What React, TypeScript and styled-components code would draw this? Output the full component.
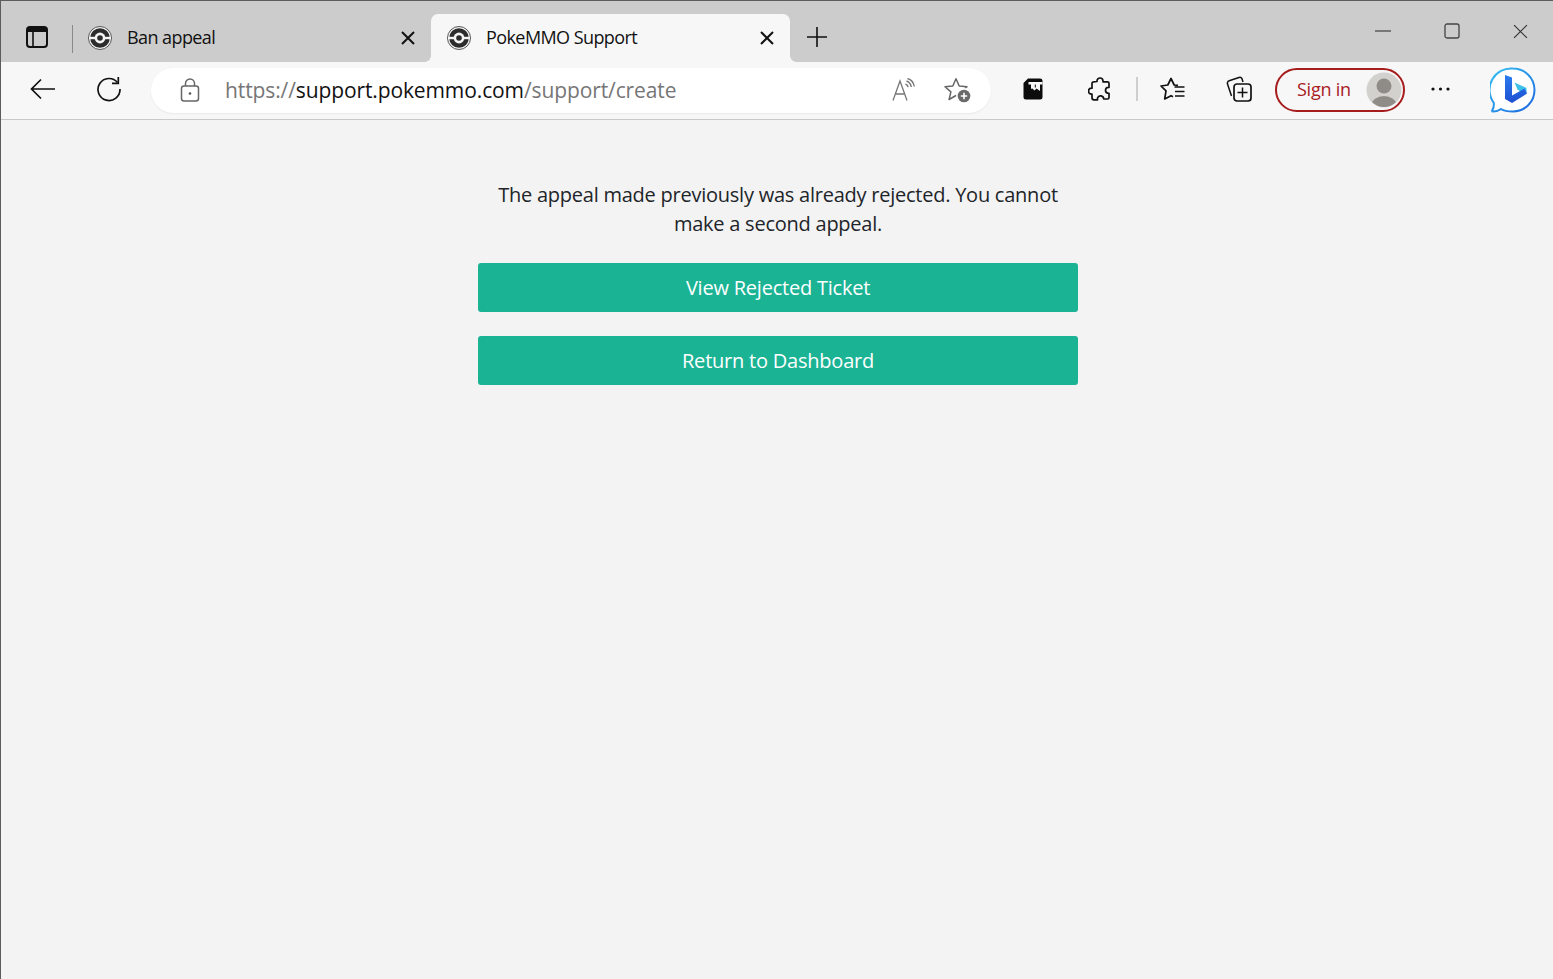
import React from "react";
import styled, { createGlobalStyle } from "styled-components";

const Global = createGlobalStyle`
  html, body { margin: 0; padding: 0; background: #f3f3f3; }
  * { box-sizing: border-box; }
`;

const Win = styled.div`
  width: 1553px; height: 979px; overflow: hidden;
  display: flex; flex-direction: column;
  border-top: 1px solid #5c5c5c; border-left: 1px solid #5c5c5c;
  background: #f3f3f3;
`;
const TabStrip = styled.div`
  height: 61px; background: #cccccc; display: flex; align-items: flex-end;
  flex-shrink: 0;
`;
const SideBtn = styled.div`
  width: 71px; height: 48px; padding: 12px 0 0 25px; flex-shrink: 0;
`;
const StripDivider = styled.div`
  width: 1px; height: 28px; background: #8a8a8a; margin-bottom: 9px; flex-shrink: 0;
`;
const Tab = styled.div<{ $active?: boolean }>`
  position: relative;
  width: ${p => (p.$active ? "359px" : "358px")};
  height: 48px; flex-shrink: 0;
  display: flex; align-items: center;
  padding: 0 16px 0 ${p => (p.$active ? "16px" : "15px")};
  background: ${p => (p.$active ? "#f7f7f7" : "transparent")};
  border-radius: 7px 7px 0 0;
  color: #111;
  font: 18px/24px "Open Sans", sans-serif;
  letter-spacing: -0.58px;
  ${p => p.$active && `
    &::before, &::after {
      content: ""; position: absolute; bottom: 0; width: 6px; height: 6px;
    }
    &::before { left: -6px; background: radial-gradient(circle at 0 0, transparent 5.500px, #f7f7f7 6px); }
    &::after { right: -6px; background: radial-gradient(circle at 100% 0, transparent 5.500px, #f7f7f7 6px); }
  `}
`;
const TabTitle = styled.span`
  flex: 1; margin-left: 15px; padding-bottom: 2px; white-space: nowrap;
`;
const PlusSlot = styled.div`
  width: 53px; height: 50px; display: flex; align-items: center; justify-content: center; flex-shrink: 0;
`;
const WinControls = styled.div`
  margin-left: auto; align-self: flex-start; display: flex; padding-top: 20px; margin-right: -2px;
`;
const WinBtn = styled.div`
  width: 69px; height: 20px; display: flex; align-items: center; justify-content: center;
`;
const Toolbar = styled.div`
  height: 58px; background: #f7f7f7; border-bottom: 1px solid #c9c9c9; flex-shrink: 0;
  display: flex; align-items: center; padding-bottom: 3px;
`;
const ToolIcon = styled.div<{ $w: number; $ml?: number; $mt?: number }>`
  width: ${p => p.$w}px; margin-left: ${p => p.$ml ?? 0}px; margin-top: ${p => p.$mt ?? 0}px; height: 44px; flex-shrink: 0;
  display: flex; align-items: center; justify-content: center;
`;
const Address = styled.div`
  width: 840px; height: 45px; margin: 2px 0 0 29px; flex-shrink: 0;
  background: #fff; border-radius: 23px; display: flex; align-items: center;
  box-shadow: 0 1px 2px rgba(0,0,0,.06);
  padding: 0 19px 0 28px;
`;
const Url = styled.div`
  flex: 1; margin-left: 24px; color: #767676; white-space: nowrap;
  font: 21px/28px "Open Sans", sans-serif; letter-spacing: -0.11px;
`;
const Host = styled.span`color: #111;`;
const ToolSep = styled.div`
  width: 2px; height: 24px; background: #cfcfcf; flex-shrink: 0;
`;
const SignIn = styled.div`
  width: 130px; height: 44px; margin: 2px 0 0 23px; flex-shrink: 0;
  border: 2px solid #a61b1b; border-radius: 22px; background: #f7f7f7;
  display: flex; align-items: center; padding: 0 1px 0 20px; justify-content: space-between;
  color: #a8201f; font: 18px/24px "Open Sans", sans-serif; letter-spacing: -0.25px;
`;
const SignInLabel = styled.span`
  padding-bottom: 2px;
`;
const Main = styled.main`
  flex: 1; display: flex; flex-direction: column; align-items: center; padding-top: 60px;
  background: #f3f3f3;
  font-family: "Open Sans", sans-serif;
`;
const Panel = styled.div`
  width: 600px; margin-left: 2px; display: flex; flex-direction: column; gap: 24px;
`;
const Message = styled.p`
  margin: 0 0 1px; text-align: center; color: #212529;
  font-size: 20px; line-height: 29px; letter-spacing: -0.24px;
`;
const ActionButton = styled.a`
  display: flex; height: 49px; align-items: center; justify-content: center;
  background: #1ab394; color: #fff; border-radius: 3px;
  font-size: 20px; letter-spacing: -0.22px;
`;

const Ball = () => (
  <svg width="24" height="24" viewBox="0 0 24 24">
    <circle cx="12" cy="12" r="11.5" fill="#f4f4f4" stroke="#555" strokeWidth="1" />
    <circle cx="12" cy="12" r="9.8" fill="#2c2c2c" />
    <rect x="1" y="10.8" width="22" height="2.4" fill="#f4f4f4" />
    <circle cx="12" cy="12" r="5.4" fill="#f4f4f4" />
    <circle cx="12" cy="12" r="2.8" fill="#2c2c2c" />
  </svg>
);
const CloseX = ({ c = "#111", s = 14, w = 2 }: { c?: string; s?: number; w?: number }) => (
  <svg width={s} height={s} viewBox="0 0 14 14"><path d="M1 1 13 13M13 1 1 13" stroke={c} strokeWidth={w} fill="none" /></svg>
);

export default function App() {
  return (
    <>
      <Global />
      <Win>
        <TabStrip>
          <SideBtn>
            <svg width="22" height="22" viewBox="0 0 22 22" fill="none">
              <rect x="1" y="1" width="20" height="20" rx="3" stroke="#111" strokeWidth="2" />
              <path d="M2 2h18v4H2z" fill="#111" />
              <path d="M7 6v14" stroke="#111" strokeWidth="1.6" />
            </svg>
          </SideBtn>
          <StripDivider />
          <Tab>
            <Ball />
            <TabTitle>Ban appeal</TabTitle>
            <CloseX />
          </Tab>
          <Tab $active>
            <Ball />
            <TabTitle>PokeMMO Support</TabTitle>
            <CloseX />
          </Tab>
          <PlusSlot>
            <svg width="22" height="22" viewBox="0 0 22 22"><path d="M11 1v20M1 11h20" stroke="#111" strokeWidth="1.6" /></svg>
          </PlusSlot>
          <WinControls>
            <WinBtn><svg width="16" height="2"><path d="M0 1h16" stroke="#222" strokeWidth="1" /></svg></WinBtn>
            <WinBtn><svg width="16" height="16" viewBox="0 0 16 16"><rect x="1" y="1" width="14" height="14" rx="2" fill="none" stroke="#444" strokeWidth="1.3" /></svg></WinBtn>
            <WinBtn><CloseX c="#333" s={15} w={1.1} /></WinBtn>
          </WinControls>
        </TabStrip>
        <Toolbar>
          <ToolIcon $w={26} $ml={29}>
            <svg width="26" height="22" viewBox="0 0 26 22" fill="none"><path d="M25 11H1.5M11 1.5 1.5 11l9.500 9.500" stroke="#111" strokeWidth="1.7" /></svg>
          </ToolIcon>
          <ToolIcon $w={26} $ml={40}>
            <svg width="26" height="26" viewBox="0 0 26 26" fill="none"><path d="M21.500 6.500A11 11 0 1 0 24 13" stroke="#111" strokeWidth="1.7" /><path d="M22.300 1v6.300H16" stroke="#111" strokeWidth="1.7" /></svg>
          </ToolIcon>
          <Address>
            <svg width="22" height="24" viewBox="0 0 22 24" fill="none">
              <rect x="2.500" y="8" width="17" height="15" rx="2.500" stroke="#666" strokeWidth="1.5" />
              <path d="M6.500 8V5.500a4.500 4.500 0 0 1 9 0V8" stroke="#666" strokeWidth="1.500" />
              <circle cx="11" cy="15.500" r="1.300" fill="#555" />
            </svg>
            <Url>https://<Host>support.pokemmo.com</Host>/support/create</Url>
            <ToolIcon $w={30}>
              <svg width="26" height="24" viewBox="0 0 26 24" fill="none">
                <path d="M2 22.500 9 3l7 19.500M4.500 16h9" stroke="#777" strokeWidth="1.300" />
                <path d="M14.500 6c1.500.600 2.300 1.600 2.700 3.200M15.500 3c2.800 1 4.300 3 4.800 6M16.500 .500c4 1.200 6.200 4 6.800 8" stroke="#777" strokeWidth="1.400" />
              </svg>
            </ToolIcon>
            <ToolIcon $w={28} $ml={25}>
              <svg width="28" height="26" viewBox="0 0 28 26" fill="none">
                <path d="M12 1.800 15.200 9l7.800.700-5.900 5.200 1.800 7.600-6.900-4-6.900 4 1.800-7.600L1 9.700 8.800 9z" stroke="#666" strokeWidth="1.500" strokeLinejoin="round" />
                <circle cx="20" cy="19" r="8" fill="#fff" />
                <circle cx="20" cy="19" r="6.300" fill="#6a6a6a" />
                <path d="M20 15.800v6.400M16.800 19h6.400" stroke="#fff" strokeWidth="1.600" />
              </svg>
            </ToolIcon>
          </Address>
          <ToolIcon $w={22} $ml={31}>
            <svg width="20" height="22" viewBox="0 0 20 22">
              <path d="M5 .500h12a2.500 2.500 0 0 1 2.500 2.500v16a2.500 2.500 0 0 1-2.500 2.500H3A2.500 2.500 0 0 1 .500 19V5z" fill="#0c0c0c" />
              <path d="M5.500 4h14v2.500h-2.500v6.500l-3.500-2.600-2 2.200-2.500-2.300-1 1V6.500H5.500z" fill="#f7f7f7" />
              <path d="M11.800 6.500h1v3h-1z" fill="#0c0c0c" />
            </svg>
          </ToolIcon>
          <ToolIcon $w={24} $ml={44}>
            <svg width="24" height="24" viewBox="0 0 24 24" fill="none">
              <path d="M9 4.500V4a3 3 0 0 1 6 0v.800h4.500a1.500 1.500 0 0 1 1.500 1.500v4h-.500a3 3 0 0 0 0 6h.5v4.200a1.500 1.500 0 0 1-1.500 1.500h-3.800V22a3.200 3.200 0 0 0-6.200-1v1.800H6a2 2 0 0 1-2-2v-3.600H3.500a3 3 0 0 1 0-6H4V6.300a1.500 1.500 0 0 1 1.500-1.500z" stroke="#111" strokeWidth="1.700" strokeLinejoin="round" />
            </svg>
          </ToolIcon>
          <ToolIcon $w={2} $ml={24}><ToolSep /></ToolIcon>
          <ToolIcon $w={26} $ml={22}>
            <svg width="26" height="24" viewBox="0 0 26 24" fill="none">
              <path d="M18 8.300 14.200 8 11 1.500 7.800 8 1 9l5 4.900L4.700 22l6.300-3.300 2 1" stroke="#111" strokeWidth="1.700" strokeLinejoin="round" />
              <path d="M14.500 10h10M15 14.500h9.500M15 19h9.500" stroke="#111" strokeWidth="1.500" />
            </svg>
          </ToolIcon>
          <ToolIcon $w={26} $ml={40}>
            <svg width="26" height="26" viewBox="0 0 26 26" fill="none">
              <path d="M5.500 20 1.500 8a2.500 2.500 0 0 1 1.700-3.200L13 1.500a2.500 2.500 0 0 1 3 1.200L17 6" stroke="#111" strokeWidth="1.500" />
              <rect x="8" y="8" width="17" height="17" rx="3" fill="#f7f7f7" stroke="#111" strokeWidth="1.700" />
              <path d="M16.500 11.500v10M11.500 16.500h10" stroke="#111" strokeWidth="1.500" />
            </svg>
          </ToolIcon>
          <SignIn>
            <SignInLabel>Sign in</SignInLabel>
            <svg width="36" height="36" viewBox="0 0 36 36">
              <defs><clipPath id="av"><circle cx="18" cy="18" r="17" /></clipPath></defs>
              <circle cx="18" cy="18" r="17.500" fill="#d3d1ce" />
              <g clipPath="url(#av)" fill="#8f8c88">
                <circle cx="18" cy="14" r="7.500" />
                <ellipse cx="18" cy="33" rx="12.500" ry="9" />
              </g>
            </svg>
          </SignIn>
          <ToolIcon $w={22} $ml={25}>
            <svg width="22" height="4" viewBox="0 0 22 4" fill="#111"><circle cx="3" cy="2" r="1.600" /><circle cx="10.500" cy="2" r="1.600" /><circle cx="18" cy="2" r="1.600" /></svg>
          </ToolIcon>
          <ToolIcon $w={48} $ml={37} $mt={2}>
            <svg width="46" height="46" viewBox="0 0 46 46">
              <defs>
                <linearGradient id="ring" x1="0" y1="0" x2="1" y2="1"><stop offset="0" stopColor="#35c1f1" /><stop offset="1" stopColor="#1b66e0" /></linearGradient>
                <linearGradient id="bb" x1="0" y1="0" x2="0" y2="1"><stop offset="0" stopColor="#2a7bf0" /><stop offset="1" stopColor="#1d4fd0" /></linearGradient>
              </defs>
              <path d="M23 1.500a21.500 21.500 0 0 1 0 43c-5 0-9-.500-12-2.500-2 1.500-5 2.500-8 2.500-1 0-1.200-1-.5-1.700 1-1.500 1.500-4 1.300-7A21.500 21.500 0 0 1 23 1.500z" fill="#fff" stroke="url(#ring)" strokeWidth="2" />
              <path d="M24.500 15.500l12 5.500v5.500l-2 1-7-5z" fill="#3fc0e8" />
              <path d="M15 8l7 2.500v18l12.500-7 2.500 5-15 9.500-7-4z" fill="url(#bb)" />
            </svg>
          </ToolIcon>
        </Toolbar>
        <Main>
          <Panel>
            <Message>The appeal made previously was already rejected. You cannot make a second appeal.</Message>
            <ActionButton>View Rejected Ticket</ActionButton>
            <ActionButton>Return to Dashboard</ActionButton>
          </Panel>
        </Main>
      </Win>
    </>
  );
}
